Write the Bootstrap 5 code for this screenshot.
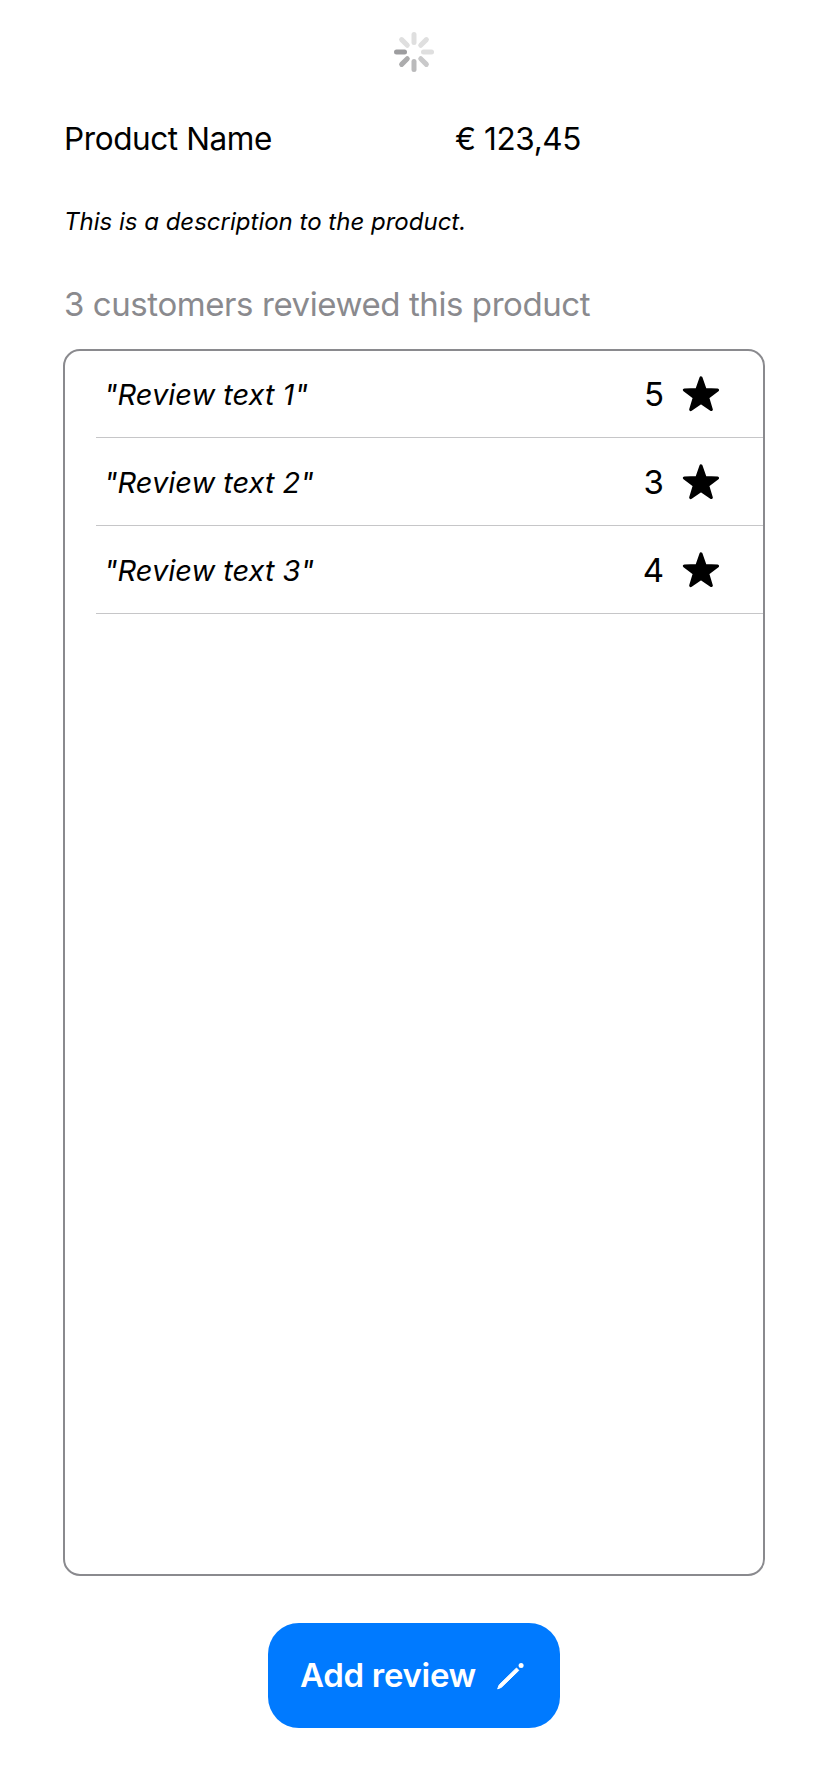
<!DOCTYPE html>
<html lang="en">
<head>
<meta charset="utf-8">
<meta name="viewport" content="width=device-width, initial-scale=1">
<title>Product Name</title>
<link href="https://cdn.jsdelivr.net/npm/bootstrap@5.3.0/dist/css/bootstrap.min.css" rel="stylesheet">
<style>
  body { font-family: Inter, "Liberation Sans", sans-serif; color: #000; background: #fff; }
  .screen { height: 1792px; padding: 30px 63px 64px; }
  .product-row { height: 48px; margin-top: 41px; font-size: 31.5px; line-height: 48px; }
  .product-title { width: 392px; padding-left: 1px; letter-spacing: -.4px; }
  .price { letter-spacing: -.4px; }
  .description { height: 36px; margin: 41px 0 0; padding-left: 1px; font-size: 24px; line-height: 36px; }
  .summary { height: 48px; margin: 40px 0 0; font-size: 33px; line-height: 48px; padding-left: 1px; color: #8a8a8e; letter-spacing: -.42px; }
  .reviews { margin-top: 21px; height: 1227px; border: 2px solid #8a8a8e; border-radius: 17px; }
  .review { height: 88px; margin-left: 31px; padding: 0 43px 0 8px; border-bottom: 1px solid #c6c6c8; }
  .review:first-child { margin-top: -1px; }
  .review-text { font-size: 29px; letter-spacing: 0; padding-top: 2px; }
  .rating { font-size: 33px; margin-right: 18px; padding-top: 2px; }
  .star { margin-top: 1px; }
  .add-review { width: 292px; height: 105px; margin-top: 47px; padding: 0 35px 0 32px; border: 0; border-radius: 31px; background: #007aff; color: #fff; font-size: 33px; font-weight: 600; letter-spacing: -.3px; }
  .add-review:hover { background: #007aff; color: #fff; }
</style>
</head>
<body>
<main class="screen d-flex flex-column">
  <svg class="d-block mx-auto flex-shrink-0" width="44" height="44" viewBox="-22 -22 44 44" stroke-width="5" stroke-linecap="round" role="status" aria-label="Loading">
    <path d="M0-9.5V-17.5" stroke="#dfdfdf"/>
    <path d="M0-9.5V-17.5" stroke="#dfdfdf" transform="rotate(45)"/>
    <path d="M0-9.5V-17.5" stroke="#dfdfdf" transform="rotate(90)"/>
    <path d="M0-9.5V-17.5" stroke="#c9c9ca" transform="rotate(135)"/>
    <path d="M0-9.5V-17.5" stroke="#bababb" transform="rotate(180)"/>
    <path d="M0-9.5V-17.5" stroke="#acacad" transform="rotate(225)"/>
    <path d="M0-9.5V-17.5" stroke="#9d9d9f" transform="rotate(270)"/>
    <path d="M0-9.5V-17.5" stroke="#dfdfdf" transform="rotate(315)"/>
  </svg>

  <div class="product-row d-flex flex-shrink-0">
    <div class="product-title"><span>Product Name</span></div>
    <div class="price">€ 123,45</div>
  </div>
  <p class="description fst-italic flex-shrink-0">This is a description to the product.</p>
  <h2 class="summary fw-normal flex-shrink-0">3 customers reviewed this product</h2>

  <div class="reviews flex-shrink-0">
    <div class="review d-flex align-items-center">
      <span class="review-text fst-italic me-auto">"Review text 1"</span>
      <span class="rating">5</span>
      <svg class="star" width="38" height="36" viewBox="0 0 38 36"><path d="M19 2 23.1 13.7 35.5 14 25.6 21.5 29.2 33.5 19 26.4 8.8 33.5 12.4 21.5 2.5 14 14.9 13.7Z" stroke="#000" stroke-width="3.2" stroke-linejoin="round"/></svg>
    </div>
    <div class="review d-flex align-items-center">
      <span class="review-text fst-italic me-auto">"Review text 2"</span>
      <span class="rating">3</span>
      <svg class="star" width="38" height="36" viewBox="0 0 38 36"><path d="M19 2 23.1 13.7 35.5 14 25.6 21.5 29.2 33.5 19 26.4 8.8 33.5 12.4 21.5 2.5 14 14.9 13.7Z" stroke="#000" stroke-width="3.2" stroke-linejoin="round"/></svg>
    </div>
    <div class="review d-flex align-items-center">
      <span class="review-text fst-italic me-auto">"Review text 3"</span>
      <span class="rating">4</span>
      <svg class="star" width="38" height="36" viewBox="0 0 38 36"><path d="M19 2 23.1 13.7 35.5 14 25.6 21.5 29.2 33.5 19 26.4 8.8 33.5 12.4 21.5 2.5 14 14.9 13.7Z" stroke="#000" stroke-width="3.2" stroke-linejoin="round"/></svg>
    </div>
  </div>

  <button type="button" class="btn add-review d-flex align-items-center justify-content-between mx-auto flex-shrink-0">
    <span>Add review</span>
    <svg width="30" height="30" viewBox="0 0 30 30" fill="#fff"><path d="M2.7 27.9 4.2 23.9 21.5 7 23.8 9.4 6.4 26.3Z" stroke="#fff" stroke-width="1" stroke-linejoin="round"/><circle cx="26.1" cy="4.5" r="2.5"/></svg>
  </button>
</main>
<script src="https://cdn.jsdelivr.net/npm/bootstrap@5.3.0/dist/js/bootstrap.bundle.min.js"></script>
</body>
</html>
